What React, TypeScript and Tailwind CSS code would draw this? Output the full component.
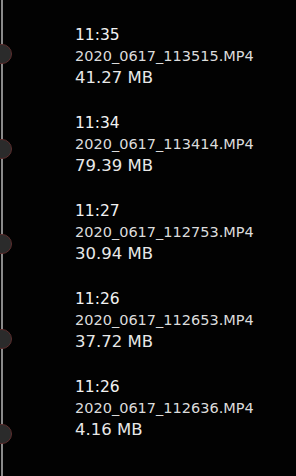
import React from "react";

const items = [
  { time: "11:35", name: "2020_0617_113515.MP4", size: "41.27 MB" },
  { time: "11:34", name: "2020_0617_113414.MP4", size: "79.39 MB" },
  { time: "11:27", name: "2020_0617_112753.MP4", size: "30.94 MB" },
  { time: "11:26", name: "2020_0617_112653.MP4", size: "37.72 MB" },
  { time: "11:26", name: "2020_0617_112636.MP4", size: "4.16 MB" },
];

export default function App() {
  return (
    <div
      className="flex h-[476px] w-[296px] overflow-hidden bg-[#020202]"
      style={{ fontFamily: "'DejaVu Sans', 'Liberation Sans', sans-serif" }}
    >
      {/* timeline */}
      <div className="relative w-[14px] shrink-0">
        <div className="absolute inset-y-0 left-[1px] w-[2px] bg-[#8a8a8a]" />
        <div className="relative flex flex-col gap-[75px] pt-[44px]">
          {items.map((_, i) => (
            <div
              key={i}
              className="-ml-[9px] h-[20px] w-[21px] rounded-full border border-[#5b2d2d] bg-[#2b2b2b]"
            />
          ))}
        </div>
      </div>

      {/* entries */}
      <div className="flex flex-col gap-[24px] pl-[61px] pt-[25px]">
        {items.map((it, i) => (
          <div key={i} className="flex flex-col whitespace-nowrap">
            <span className="text-[15.5px] leading-[20px] text-[#f2f2f2]">{it.time}</span>
            <span className="text-[14.5px] leading-[22px] text-[#dcdcdc]">{it.name}</span>
            <span className="text-[16.5px] leading-[22px] text-[#e8e8e8]">{it.size}</span>
          </div>
        ))}
      </div>
    </div>
  );
}
